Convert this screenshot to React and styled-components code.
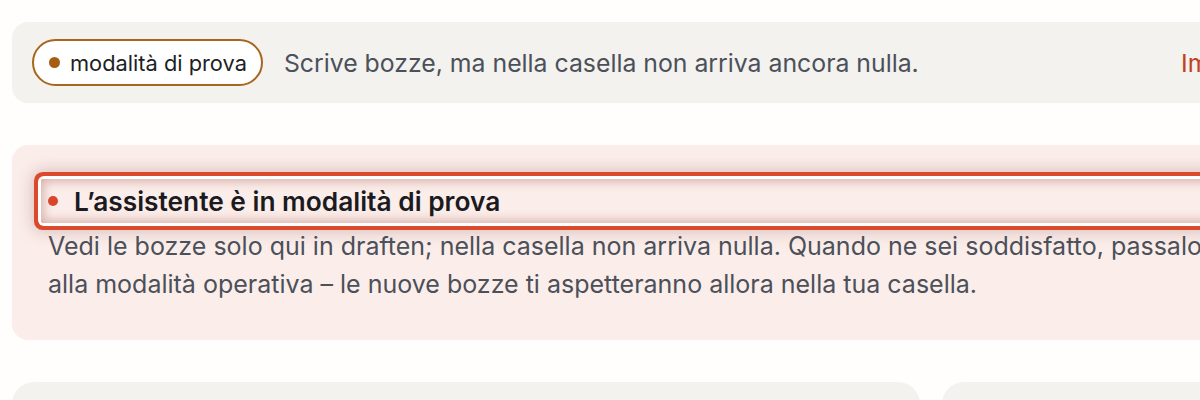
import React from "react";
import styled, { createGlobalStyle } from "styled-components";

const GlobalStyle = createGlobalStyle`
  html, body {
    margin: 0;
    padding: 0;
    background: #fffefd;
    overflow: hidden;
  }
  body {
    font-family: Inter, "Noto Sans", sans-serif;
    -webkit-font-smoothing: antialiased;
  }
`;

const Page = styled.main`
  width: 1338px;
  padding: 22px 0 0 12px;
  display: flex;
  flex-direction: column;
  gap: 42px;
`;

const ModeBar = styled.section`
  display: flex;
  align-items: center;
  height: 81px;
  padding: 0 20px;
  box-sizing: border-box;
  background: #f3f2ef;
  border-radius: 16px;
`;

const Pill = styled.span`
  display: inline-flex;
  align-items: center;
  gap: 10px;
  height: 47px;
  box-sizing: border-box;
  padding: 0 14px 0 15px;
  border: 2px solid #a8651c;
  border-radius: 999px;
  background: #fff;
  color: #1d1f24;
  font-size: 21.8px;
  white-space: nowrap;
`;

const Dot = styled.span`
  width: ${(p) => p.$size}px;
  height: ${(p) => p.$size}px;
  border-radius: 50%;
  background: ${(p) => p.$color};
  flex: none;
`;

const BarText = styled.p`
  margin: 0 0 0 21px;
  flex: 1;
  color: #4b5059;
  font-size: 24.8px;
  white-space: nowrap;
`;

const BarLink = styled.a`
  color: #c2401f;
  font-size: 24.8px;
  text-decoration: none;
  white-space: nowrap;
`;

const NoticeCard = styled.section`
  background: #fbedea;
  border-radius: 16px;
  padding: 34px 36px 37px 36px;
`;

const NoticeTitle = styled.h2`
  display: flex;
  align-items: center;
  gap: 16px;
  margin: 0 -36px 4px -7px;
  padding: 0 7px;
  height: 44px;
  font-size: 26.3px;
  font-weight: 600;
  color: #1b1b1f;
  box-shadow:
    inset 0 0 10px 3px rgba(160, 80, 66, 0.36),
    0 0 0 3px #ffffff,
    0 0 0 7px #dc4a2d,
    0 0 16px 8px rgba(110, 50, 40, 0.26);
  border-radius: 3px;
`;

const NoticeText = styled.p`
  margin: 0;
  max-width: 1172px;
  color: #4b5059;
  font-size: 25px;
  line-height: 38px;
`;

const Grid = styled.div`
  display: grid;
  grid-template-columns: 908px 1fr;
  gap: 22px;
`;

const Panel = styled.div`
  height: 200px;
  background: #f3f2ef;
  border-radius: 22px;
`;

export default function App() {
  return (
    <>
      <GlobalStyle />
      <Page>
        <ModeBar>
          <Pill>
            <Dot $size={11} $color="#a65d13" />
            modalità di prova
          </Pill>
          <BarText>Scrive bozze, ma nella casella non arriva ancora nulla.</BarText>
          <BarLink href="#">Impostazioni</BarLink>
        </ModeBar>

        <NoticeCard>
          <NoticeTitle tabIndex={-1}>
            <Dot $size={10} $color="#d9462b" />
            L’assistente è in modalità di prova
          </NoticeTitle>
          <NoticeText>
            Vedi le bozze solo qui in draften; nella casella non arriva nulla. Quando ne sei
            soddisfatto, passalo alla modalità operativa – le nuove bozze ti aspetteranno
            allora nella tua casella.
          </NoticeText>
        </NoticeCard>

        <Grid>
          <Panel />
          <Panel />
        </Grid>
      </Page>
    </>
  );
}
